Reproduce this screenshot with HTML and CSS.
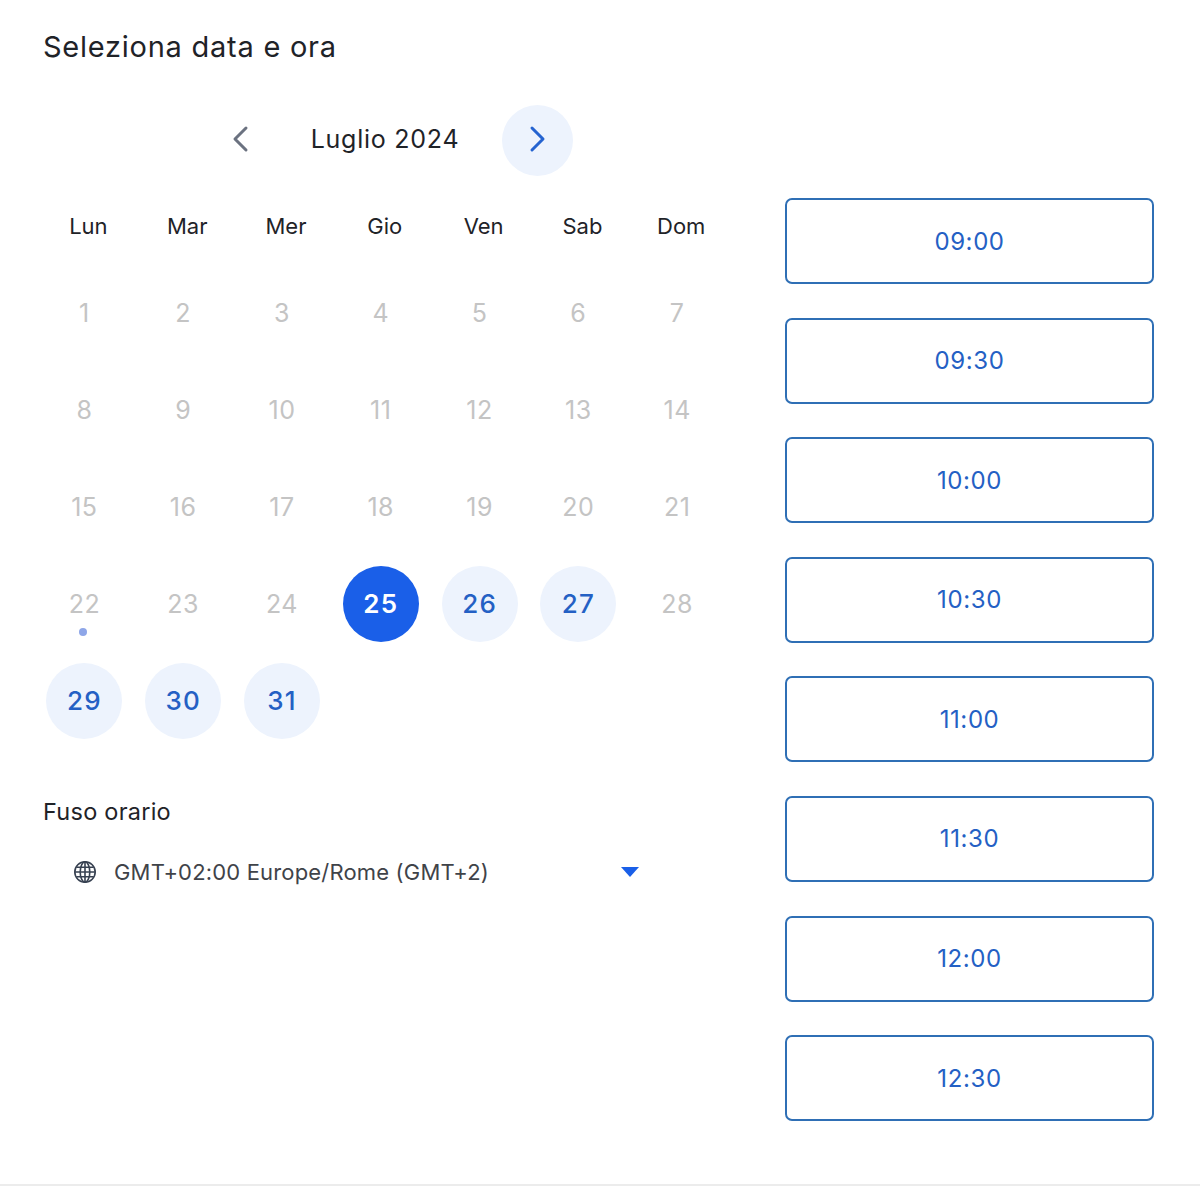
FILE: index.html
```html
<!DOCTYPE html>
<html lang="it">
<head>
<meta charset="utf-8">
<title>Seleziona data e ora</title>
<link rel="stylesheet" href="styles.css">
</head>
<body>
<main class="page">
  <h1 class="title">Seleziona data e ora</h1>
  <div class="columns">
    <section class="left">
      <div class="nav">
        <button class="nav-btn" aria-label="Precedente">
          <svg class="chev" width="24" height="32" viewBox="0 0 24 32"><path d="M18 5 L7 16 L18 27" fill="none" stroke="#6b7280" stroke-width="3" stroke-linecap="round" stroke-linejoin="round"/></svg>
        </button>
        <div class="month">Luglio 2024</div>
        <button class="nav-btn next" aria-label="Successivo">
          <svg class="chev" width="24" height="32" viewBox="0 0 24 32"><path d="M6 5 L17 16 L6 27" fill="none" stroke="#2563d0" stroke-width="3" stroke-linecap="round" stroke-linejoin="round"/></svg>
        </button>
      </div>
      <div class="weekdays">
        <span>Lun</span><span>Mar</span><span>Mer</span><span>Gio</span><span>Ven</span><span>Sab</span><span>Dom</span>
      </div>
      <div class="days">
        <span class="day">1</span><span class="day">2</span><span class="day">3</span><span class="day">4</span><span class="day">5</span><span class="day">6</span><span class="day">7</span>
        <span class="day">8</span><span class="day">9</span><span class="day">10</span><span class="day">11</span><span class="day">12</span><span class="day">13</span><span class="day">14</span>
        <span class="day">15</span><span class="day">16</span><span class="day">17</span><span class="day">18</span><span class="day">19</span><span class="day">20</span><span class="day">21</span>
        <span class="day today">22</span><span class="day">23</span><span class="day">24</span><span class="day selected">25</span><span class="day open">26</span><span class="day open">27</span><span class="day">28</span>
        <span class="day open">29</span><span class="day open">30</span><span class="day open">31</span>
      </div>
      <h2 class="tz-label">Fuso orario</h2>
      <div class="tz">
        <svg class="globe" width="24" height="24" viewBox="0 0 24 24" fill="none" stroke="#374151" stroke-width="1.6"><circle cx="12" cy="12" r="10.2"/><ellipse cx="12" cy="12" rx="4.8" ry="10.2"/><path d="M2 12h20M3.3 7.2h17.4M3.3 16.8h17.4M12 2v20"/></svg>
        <span class="tz-text">GMT+02:00 Europe/Rome (GMT+2)</span>
        <span class="caret"></span>
      </div>
    </section>
    <section class="times">
      <button class="slot">09:00</button>
      <button class="slot">09:30</button>
      <button class="slot">10:00</button>
      <button class="slot">10:30</button>
      <button class="slot">11:00</button>
      <button class="slot">11:30</button>
      <button class="slot">12:00</button>
      <button class="slot">12:30</button>
    </section>
  </div>
</main>
</body>
</html>
```
FILE: styles.css
```css
* { box-sizing: border-box; }
html, body { margin: 0; padding: 0; background: #fff; }
body {
  height: 1186px;
  overflow: hidden;
  font-family: Inter, "Liberation Sans", sans-serif;
  color: #1f2328;
}
.page {
  height: 1186px;
  padding: 29px 46px 0 43px;
  border-bottom: 2px solid #ececec;
}
.title {
  margin: 0;
  font-size: 29px;
  line-height: 36px;
  font-weight: 400;
  letter-spacing: 0.75px;
}
.columns {
  display: flex;
  justify-content: space-between;
  margin-top: 40px;
}
.left { width: 692px; margin-left: -8px; }
.nav {
  display: flex;
  align-items: center;
  height: 71px;
  padding-left: 169px;
}
.nav-btn {
  width: 71px;
  height: 71px;
  padding: 0;
  border: 0;
  border-radius: 50%;
  background: transparent;
  display: flex;
  align-items: center;
  justify-content: center;
}
.chev { margin-bottom: 4px; }
.nav-btn.next { background: #edf3fd; margin-left: 7px; }
.month {
  width: 220px;
  padding-bottom: 4px;
  text-align: center;
  font-size: 25px;
  letter-spacing: 0.75px;
}
.weekdays {
  display: grid;
  grid-template-columns: repeat(7, 98.8px);
  margin: 36px 0 0 4px;
  height: 28px;
  text-align: center;
  font-size: 22px;
  line-height: 28px;
}
.days {
  display: grid;
  grid-template-columns: repeat(7, 98.8px);
  grid-auto-rows: 97px;
  margin-top: 24px;
}
.day {
  position: relative;
  width: 76px;
  height: 76px;
  justify-self: center;
  align-self: center;
  border-radius: 50%;
  display: flex;
  align-items: center;
  justify-content: center;
  font-size: 25px;
  letter-spacing: 0.5px;
  color: #c4c4c4;
}
.day.open { background: #edf3fd; color: #2460c4; font-weight: 500; font-size: 26px; letter-spacing: 1.2px; }
.day.selected { background: #1a5fe8; color: #fff; font-weight: 600; font-size: 26px; letter-spacing: 1.2px; }
.day.today::after {
  content: "";
  position: absolute;
  left: 33px;
  top: 62px;
  width: 8px;
  height: 8px;
  border-radius: 50%;
  background: #8ea6e8;
}
.tz-label {
  margin: 47px 0 0 8px;
  font-size: 23.5px;
  line-height: 32px;
  font-weight: 400;
  letter-spacing: 0.25px;
}
.tz {
  display: flex;
  align-items: center;
  margin: 28px 0 0 38px;
  height: 32px;
  color: #3f4349;
}
.globe { flex: none; }
.tz-text {
  margin-left: 17px;
  font-size: 22px;
  letter-spacing: 0.17px;
}
.caret {
  margin-left: 132px;
  width: 0;
  height: 0;
  border-left: 9px solid transparent;
  border-right: 9px solid transparent;
  border-top: 10px solid #1a5fe8;
}
.times {
  width: 369px;
  margin-top: 93px;
  display: flex;
  flex-direction: column;
  gap: 33.6px;
}
.slot {
  height: 86px;
  padding: 0;
  background: #fff;
  border: 2px solid #2f6fb5;
  border-radius: 7px;
  font-family: inherit;
  font-size: 24px;
  letter-spacing: 0.6px;
  color: #2460c4;
}
```
